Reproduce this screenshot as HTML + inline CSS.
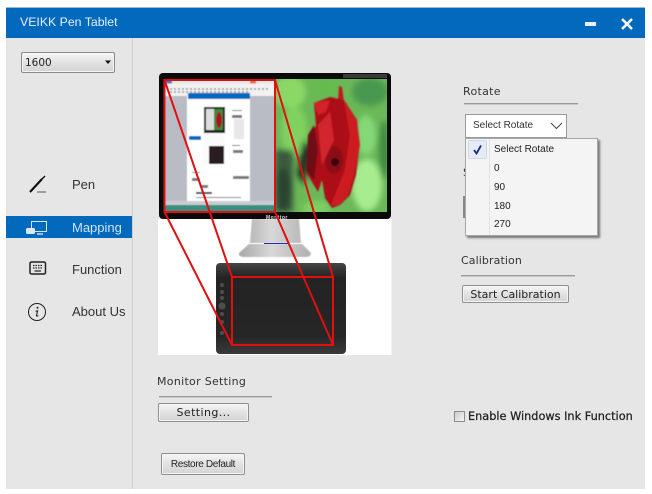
<!DOCTYPE html>
<html><head><meta charset="utf-8">
<style>
html,body{margin:0;padding:0;background:#fff;}
body{width:652px;height:494px;position:relative;overflow:hidden;font-family:"Liberation Sans",sans-serif;color:#222;}
.a{position:absolute;white-space:nowrap;}
.nav{font-size:13px;left:72px;line-height:16px;color:#333;}
.h{line-height:14px;color:#333;letter-spacing:.3px;font-family:"DejaVu Sans","Liberation Sans",sans-serif;font-size:11px;}
.rule{height:1px;background:#999;border-bottom:1px solid #c8c8c8;}
.btn{box-sizing:border-box;border:1px solid #8f8f8f;border-radius:2px;background:linear-gradient(#f6f6f6,#e2e2e2 50%,#d4d4d4);text-align:center;color:#222;box-shadow:inset 0 0 0 1px #f4f4f4;}
.mi{left:494px;font-size:10px;line-height:12px;color:#222;}
</style></head>
<body>
<div class="a" style="left:6px;top:8px;width:639px;height:481px;background:#e6e6e6;"></div>
<div class="a" style="left:6px;top:7px;width:639px;height:1px;background:#9db8cf;"></div>
<div class="a" style="left:6px;top:8px;width:639px;height:30px;background:#0369bd;"></div>
<div class="a" style="left:20px;top:15px;font-size:12.3px;line-height:15px;color:#e4f1fb;">VEIKK Pen Tablet</div>
<div class="a" style="left:585px;top:22px;width:11px;height:4px;background:#e8f2fa;"></div>
<svg class="a" style="left:620px;top:17px" width="14" height="14"><path d="M2 2L12 12M12 2L2 12" stroke="#f4f9fd" stroke-width="2.6"/></svg>
<div class="a" style="left:132px;top:38px;width:1px;height:451px;background:#cfcfcf;"></div>

<div class="a btn" style="left:21px;top:52px;width:94px;height:21px;border-color:#8a8a8a;"></div>
<div class="a" style="left:25px;top:56px;line-height:15px;color:#222;font-family:'DejaVu Sans',sans-serif;font-size:10.5px;">1600</div>
<svg class="a" style="left:104px;top:60px" width="8" height="5"><path d="M1 0.5H7L4 4Z" fill="#111"/></svg>

<svg class="a" style="left:28px;top:174px" width="20" height="20"><path d="M2 18L14 5" stroke="#111" stroke-width="2.2" fill="none"/><path d="M14 5L17 2" stroke="#111" stroke-width="1.4" fill="none"/><path d="M9 18H18" stroke="#555" stroke-width="1"/></svg>
<div class="a nav" style="top:177px;">Pen</div>
<div class="a" style="left:6px;top:216px;width:126px;height:22px;background:#0369bd;"></div>
<svg class="a" style="left:25px;top:220px" width="24" height="16"><rect x="6.5" y="1.5" width="15" height="10" fill="none" stroke="#cfe4f5" stroke-width="1"/><path d="M12 14H18" stroke="#cfe4f5" stroke-width="1.4"/><rect x="1" y="8" width="9" height="6" rx="1.5" fill="#d5e8f7"/></svg>
<div class="a nav" style="top:220px;color:#cfe4f5;">Mapping</div>
<svg class="a" style="left:29px;top:261px" width="18" height="15"><rect x="1" y="1" width="15.5" height="12" rx="1.5" fill="none" stroke="#222" stroke-width="1.5"/><path d="M4 4.5H14M4 7H14" stroke="#222" stroke-width="1.2" stroke-dasharray="1.5 1"/><path d="M5.5 10H12" stroke="#222" stroke-width="1.2"/></svg>
<div class="a nav" style="top:262px;">Function</div>
<svg class="a" style="left:27px;top:302px" width="20" height="20"><circle cx="10" cy="10" r="8.5" fill="none" stroke="#222" stroke-width="1"/><circle cx="10.5" cy="5.8" r="1" fill="#222"/><path d="M8.6 9.2L10.6 8.8L9.5 13.6Q9.5 14.6 11.4 13.6" fill="none" stroke="#222" stroke-width="1.1"/></svg>
<div class="a nav" style="top:304px;">About Us</div>

<!-- picture -->
<svg class="a" style="left:150px;top:65px" width="250" height="295" viewBox="150 65 250 295">
<defs>
<filter id="b3" x="-30%" y="-30%" width="160%" height="160%"><feGaussianBlur stdDeviation="3"/></filter>
<filter id="b1" x="-10%" y="-10%" width="120%" height="120%"><feGaussianBlur stdDeviation="0.8"/></filter>
<filter id="b0"><feGaussianBlur stdDeviation="0.5"/></filter>
<linearGradient id="st" x1="0" x2="1"><stop offset="0" stop-color="#a8a8a8"/><stop offset=".45" stop-color="#d8d8d8"/><stop offset="1" stop-color="#b0b0b0"/></linearGradient>
<linearGradient id="tb" x1="0" y1="0" x2="0" y2="1"><stop offset="0" stop-color="#454545"/><stop offset=".16" stop-color="#232323"/><stop offset=".8" stop-color="#262626"/><stop offset="1" stop-color="#3a3a3a"/></linearGradient>
<clipPath id="sc"><rect x="275" y="79" width="112" height="133"/></clipPath>
</defs>
<rect x="158" y="219" width="233.500" height="136" fill="#fff"/>
<path d="M252 219H299L301 243L311 253Q311 257 305 257H245Q238 257 239 253L250 243Z" fill="url(#st)" filter="url(#b0)"/>
<path d="M249 243.500H302" stroke="#f0f0f0" stroke-width="1.500"/>
<path d="M264 243.500H288" stroke="#2a2ab0" stroke-width="1"/>
<rect x="159" y="73" width="232" height="146" rx="4" fill="#0a0a0a"/>
<rect x="343" y="74" width="44" height="4" fill="#3a3a3a"/>
<text x="266" y="219" font-size="5" font-weight="bold" fill="#ddd" font-family="Liberation Sans" letter-spacing=".5">Monitor</text>
<rect x="216" y="263" width="130" height="91" rx="4" fill="url(#tb)"/>
<g fill="#4d4d4d"><circle cx="222" cy="285" r="2"/><circle cx="222" cy="292" r="2"/><circle cx="222" cy="298" r="2"/><circle cx="222" cy="306" r="3.500"/><circle cx="222" cy="314" r="2"/><circle cx="222" cy="322" r="2"/><circle cx="222" cy="333" r="2"/></g>
<!-- rose screen -->
<g clip-path="url(#sc)">
<rect x="275" y="79" width="112" height="133" fill="#6bb858"/>
<g filter="url(#b3)">
<ellipse cx="290" cy="92" rx="16" ry="16" fill="#8cd866"/>
<ellipse cx="325" cy="88" rx="16" ry="10" fill="#66bb50"/>
<ellipse cx="370" cy="92" rx="18" ry="14" fill="#4a9850"/>
<ellipse cx="294" cy="130" rx="13" ry="24" fill="#80d260"/>
<rect x="275" y="150" width="18" height="62" fill="#3a5a3c"/>
<ellipse cx="283" cy="190" rx="8" ry="22" fill="#2c4432"/>
<path d="M303 140L312 150L304 185L297 175Z" fill="#1e3322"/>
<ellipse cx="366" cy="135" rx="10" ry="20" fill="#85d877"/>
<ellipse cx="367" cy="185" rx="15" ry="26" fill="#a8ec90"/>
<ellipse cx="316" cy="208" rx="14" ry="7" fill="#7cd064"/>
<ellipse cx="384" cy="150" rx="5" ry="30" fill="#3c8a40"/>
</g>
<g filter="url(#b1)">
<path d="M339 86L342 87L344 102L338 102Z" fill="#c0141f"/>
<path d="M314 103L330 97L344 100L357 120L359 150L356 175L350 195L340 205L332 208L325 198L322 180L318 192L312 182L306 172L310 140L316 125Z" fill="#ad1019"/>
<path d="M344 100L357 120L360 145L354 175L348 195L338 206L331 205L345 170L350 135Z" fill="#cc1a22"/>
<path d="M308 135L314 125L318 150L314 180L306 170Z" fill="#6e0c16"/>
<path d="M314 103L330 100L326 112L318 115Z" fill="#d42028"/>
<ellipse cx="334" cy="160" rx="9" ry="14" fill="#8c0c14"/>
<ellipse cx="335" cy="162" rx="4" ry="4" fill="#3a0508"/>
<path d="M318 125L330 112L334 140L322 165Z" fill="#d2262e"/>
</g>
</g>
<!-- screenshot part -->
<g filter="url(#b0)">
<rect x="164" y="80" width="111" height="132" fill="#b9bcc5"/>
<rect x="164" y="80" width="111" height="4" fill="#e8e8e8"/>
<rect x="164" y="84" width="111" height="12" fill="#f2f2f2"/>
<path d="M170 89H270M170 92H250" stroke="#888" stroke-width="1.500" stroke-dasharray="2 2"/>
<rect x="165" y="80" width="7" height="3.500" fill="#3b78c8"/>
<rect x="250" y="80" width="6" height="3.500" fill="#e06a4a"/>
<rect x="187" y="96" width="63" height="110" fill="#fff"/>
<rect x="188" y="93" width="62" height="6" fill="#0369bd"/>
<rect x="203" y="106" width="22" height="58" fill="#fafafa"/>
<rect x="204" y="107" width="21" height="26" fill="#222"/>
<rect x="206" y="109" width="8" height="21" fill="#ddd"/>
<rect x="214" y="109" width="9" height="21" fill="#3f8a3a"/>
<ellipse cx="219" cy="120" rx="3" ry="8" fill="#a81420"/>
<rect x="209" y="146" width="15" height="18" fill="#2c1d22"/>
<rect x="189" y="136" width="12" height="4" fill="#0369bd"/>
<g fill="#777"><rect x="232" y="110" width="10" height="1"/><rect x="232" y="115" width="10" height="3"/><rect x="234" y="119" width="10" height="20" fill="#e8e8e8"/><rect x="232" y="145" width="8" height="1"/><rect x="233" y="150" width="10" height="3"/><rect x="233" y="176" width="16" height="3"/><rect x="192" y="172" width="8" height="1"/><rect x="192" y="178" width="8" height="3"/><rect x="200" y="185" width="8" height="3"/><rect x="196" y="192" width="16" height="2" fill="#333"/><rect x="196" y="197" width="45" height="1"/></g>
<rect x="164" y="201" width="111" height="4" fill="#c9ccd2"/>
<rect x="164" y="205" width="111" height="7" fill="#3a8f80"/>
</g>
<!-- red -->
<g fill="none" stroke="#e01010" stroke-width="2">
<rect x="164.500" y="80" width="110.500" height="132"/>
<rect x="232" y="277" width="101" height="68"/>
<path d="M164.500 80L232 277M275 80L333 277M164.500 212L232 345M275 212L333 345"/>
</g>
</svg>

<!-- Rotate -->
<div class="a h" style="left:463px;top:85px;">Rotate</div>
<div class="a rule" style="left:464px;top:103px;width:114px;"></div>
<div class="a" style="left:465px;top:114px;width:102px;height:24px;box-sizing:border-box;background:#fff;border:1px solid #9a9a9a;"></div>
<div class="a" style="left:473px;top:120px;font-size:10px;line-height:12px;color:#333;">Select Rotate</div>
<svg class="a" style="left:550px;top:122px" width="13" height="8"><path d="M1 1L6.500 6.500L12 1" fill="none" stroke="#444" stroke-width="1"/></svg>
<div class="a h" style="left:463px;top:166px;">S</div>
<div class="a" style="left:463px;top:196px;width:4px;height:22px;background:#888;"></div>
<div class="a" style="left:465px;top:138px;width:133px;height:98px;box-sizing:border-box;background:#f4f4f4;border:1px solid #a8a8a8;box-shadow:2px 2px 2px #777;"></div>
<div class="a" style="left:489px;top:139px;width:1px;height:96px;background:#e2e2e2;"></div>
<div class="a" style="left:468px;top:140px;width:19px;height:19px;box-sizing:border-box;background:#e6ecf5;border:1px solid #cfd8e6;border-radius:2px;"></div>
<svg class="a" style="left:472px;top:144px" width="11" height="11"><path d="M2 6L4.500 9.500L9 1.500" fill="none" stroke="#1c2a8a" stroke-width="1.800"/></svg>
<div class="a mi" style="top:144px;">Select Rotate</div>
<div class="a mi" style="top:163px;">0</div>
<div class="a mi" style="top:182px;">90</div>
<div class="a mi" style="top:201px;">180</div>
<div class="a mi" style="top:219px;">270</div>

<!-- Calibration -->
<div class="a h" style="left:461px;top:254px;letter-spacing:.1px;">Calibration</div>
<div class="a rule" style="left:461px;top:275px;width:114px;"></div>
<div class="a btn" style="left:462px;top:285px;width:107px;height:18px;font-family:'DejaVu Sans',sans-serif;font-size:11px;line-height:17px;">Start Calibration</div>

<!-- Monitor -->
<div class="a h" style="left:157px;top:375px;">Monitor Setting</div>
<div class="a rule" style="left:159px;top:396px;width:113px;"></div>
<div class="a btn" style="left:158px;top:403px;width:91px;height:19px;font-family:'DejaVu Sans',sans-serif;font-size:11px;line-height:18px;letter-spacing:.4px;">Setting...</div>
<div class="a btn" style="left:161px;top:453px;width:84px;height:22px;font-size:10px;line-height:21px;letter-spacing:-.35px;">Restore Default</div>

<div class="a" style="left:454px;top:411px;width:11px;height:11px;box-sizing:border-box;border:1px solid #8d8d8d;background:linear-gradient(135deg,#ccc,#f5f5f5);"></div>
<div class="a" style="left:468px;top:410px;font-family:'DejaVu Sans',sans-serif;font-size:11.3px;line-height:13px;color:#222;-webkit-text-stroke:.25px #222;">Enable Windows Ink Function</div>
</body></html>
